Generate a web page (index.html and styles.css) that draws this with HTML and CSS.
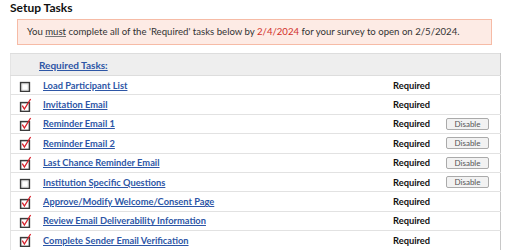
FILE: index.html
```html
<!DOCTYPE html>
<html>
<head>
<meta charset="utf-8">
<link rel="stylesheet" href="styles.css">
</head>
<body>
<div class="page">
  <h2 class="title">Setup Tasks</h2>
  <div class="alert">You <u>must</u> complete all of the 'Required' tasks below by <span class="date">2/4/2024</span> for your survey to open on 2/5/2024.</div>
  <table class="tasks">
    <tr class="head"><th colspan="4"><a href="#">Required Tasks:</a></th></tr>
    <tr><td class="cb"><svg class="box" viewBox="0 0 14 14"><rect x="2.6" y="4.6" width="8.8" height="8.8" fill="#fff" stroke="#3a3a3a" stroke-width="1.5"/><rect x="3.9" y="5.9" width="6.2" height="6.2" fill="none" stroke="#c4c4c4" stroke-width="0.7"/></svg></td><td class="name"><a href="#">Load Participant List</a></td><td class="req">Required</td><td class="act"></td></tr>
    <tr><td class="cb"><svg class="box" viewBox="0 0 14 14"><rect x="2.6" y="4.6" width="8.8" height="8.8" fill="#fff" stroke="#3a3a3a" stroke-width="1.5"/><path d="M4.3 7.6 L6.4 11 L12.6 1" fill="none" stroke="#d8202a" stroke-width="1.3"/></svg></td><td class="name"><a href="#">Invitation Email</a></td><td class="req">Required</td><td class="act"></td></tr>
    <tr><td class="cb"><svg class="box" viewBox="0 0 14 14"><rect x="2.6" y="4.6" width="8.8" height="8.8" fill="#fff" stroke="#3a3a3a" stroke-width="1.5"/><path d="M4.3 7.6 L6.4 11 L12.6 1" fill="none" stroke="#d8202a" stroke-width="1.3"/></svg></td><td class="name"><a href="#">Reminder Email 1</a></td><td class="req">Required</td><td class="act"><button class="btn">Disable</button></td></tr>
    <tr><td class="cb"><svg class="box" viewBox="0 0 14 14"><rect x="2.6" y="4.6" width="8.8" height="8.8" fill="#fff" stroke="#3a3a3a" stroke-width="1.5"/><path d="M4.3 7.6 L6.4 11 L12.6 1" fill="none" stroke="#d8202a" stroke-width="1.3"/></svg></td><td class="name"><a href="#">Reminder Email 2</a></td><td class="req">Required</td><td class="act"><button class="btn">Disable</button></td></tr>
    <tr><td class="cb"><svg class="box" viewBox="0 0 14 14"><rect x="2.6" y="4.6" width="8.8" height="8.8" fill="#fff" stroke="#3a3a3a" stroke-width="1.5"/><path d="M4.3 7.6 L6.4 11 L12.6 1" fill="none" stroke="#d8202a" stroke-width="1.3"/></svg></td><td class="name"><a href="#">Last Chance Reminder Email</a></td><td class="req">Required</td><td class="act"><button class="btn">Disable</button></td></tr>
    <tr><td class="cb"><svg class="box" viewBox="0 0 14 14"><rect x="2.6" y="4.6" width="8.8" height="8.8" fill="#fff" stroke="#3a3a3a" stroke-width="1.5"/><rect x="3.9" y="5.9" width="6.2" height="6.2" fill="none" stroke="#c4c4c4" stroke-width="0.7"/></svg></td><td class="name"><a href="#">Institution Specific Questions</a></td><td class="req">Required</td><td class="act"><button class="btn">Disable</button></td></tr>
    <tr><td class="cb"><svg class="box" viewBox="0 0 14 14"><rect x="2.6" y="4.6" width="8.8" height="8.8" fill="#fff" stroke="#3a3a3a" stroke-width="1.5"/><path d="M4.3 7.6 L6.4 11 L12.6 1" fill="none" stroke="#d8202a" stroke-width="1.3"/></svg></td><td class="name"><a href="#">Approve/Modify Welcome/Consent Page</a></td><td class="req">Required</td><td class="act"></td></tr>
    <tr><td class="cb"><svg class="box" viewBox="0 0 14 14"><rect x="2.6" y="4.6" width="8.8" height="8.8" fill="#fff" stroke="#3a3a3a" stroke-width="1.5"/><path d="M4.3 7.6 L6.4 11 L12.6 1" fill="none" stroke="#d8202a" stroke-width="1.3"/></svg></td><td class="name"><a href="#">Review Email Deliverability Information</a></td><td class="req">Required</td><td class="act"></td></tr>
    <tr><td class="cb"><svg class="box" viewBox="0 0 14 14"><rect x="2.6" y="4.6" width="8.8" height="8.8" fill="#fff" stroke="#3a3a3a" stroke-width="1.5"/><path d="M4.3 7.6 L6.4 11 L12.6 1" fill="none" stroke="#d8202a" stroke-width="1.3"/></svg></td><td class="name"><a href="#">Complete Sender Email Verification</a></td><td class="req">Required</td><td class="act"></td></tr>
  </table>
</div>
</body>
</html>
```
FILE: styles.css
```css
html, body {
  margin: 0;
  padding: 0;
  background: #fff;
}
body {
  font-family: Lato, "Open Sans", sans-serif;
  color: #222;
}
.page {
  padding: 0 6px 0 10px;
}
.title {
  font-size: 12px;
  font-weight: 700;
  margin: 0;
  padding-top: 1px;
  line-height: 14px;
  color: #111;
}
.alert {
  margin: 4px 8px 0 7px;
  background: #fdebe5;
  border: 1px solid #f6bba6;
  height: 24px;
  line-height: 24px;
  padding-left: 9px;
  font-size: 9.6px;
  color: #333;
  white-space: nowrap;
}
.alert u {
  text-decoration-color: #777;
}
.date {
  color: #d2302a;
}
.tasks {
  margin-top: 8px;
  width: 491px;
  border-collapse: collapse;
  border-left: 1px solid #e4e4e4;
  border-right: 1px solid #c8c8c8;
  border-top: 1px solid #dddddd;
}
.tasks th {
  background: #eeeeee;
  text-align: left;
  height: 21px;
  padding: 0 0 0 28px;
  font-size: 10px;
  font-weight: 700;
  border-bottom: 1px solid #dddddd;
}
.tasks a {
  color: #2d56a6;
  font-weight: 700;
  text-decoration: underline;
}
.tasks td {
  height: 18.4px;
  padding: 0;
  border-bottom: 1px solid #e2e2e2;
  font-size: 9.3px;
  vertical-align: middle;
}
.tasks td.cb {
  width: 25px;
  padding-left: 7px;
}
.box {
  width: 14px;
  height: 14px;
  display: block;
}
.tasks td.name {
  width: 350px;
}
.tasks td.req {
  font-weight: 700;
  color: #111;
  width: 53px;
  font-size: 9.3px;
}
.btn {
  font-family: Lato, sans-serif;
  font-size: 8px;
  color: #555;
  background: #f2f2f2;
  border: 1px solid #aaa;
  border-radius: 2px;
  width: 43px;
  height: 12px;
  padding: 0;
  line-height: 10px;
  display: block;
}
```
